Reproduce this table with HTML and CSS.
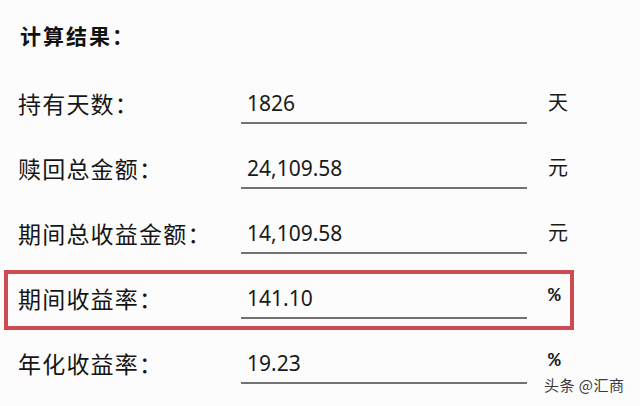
FILE: index.html
```html
<!DOCTYPE html>
<html lang="zh-CN">
<head>
<meta charset="utf-8">
<link rel="stylesheet" href="styles.css">
</head>
<body>
<div class="page">
  <h1 class="title">计算结果：</h1>
  <div class="row">
    <div class="label">持有天数：</div>
    <div class="field">1826</div>
    <div class="unit">天</div>
  </div>
  <div class="row">
    <div class="label">赎回总金额：</div>
    <div class="field">24,109.58</div>
    <div class="unit">元</div>
  </div>
  <div class="row">
    <div class="label">期间总收益金额：</div>
    <div class="field">14,109.58</div>
    <div class="unit">元</div>
  </div>
  <div class="row row-highlight">
    <div class="label">期间收益率：</div>
    <div class="field">141.10</div>
    <div class="unit unit-pct">%</div>
  </div>
  <div class="row">
    <div class="label">年化收益率：</div>
    <div class="field">19.23</div>
    <div class="unit unit-pct">%</div>
  </div>
  <div class="watermark">头条 @汇商</div>
</div>
</body>
</html>
```
FILE: styles.css
```css
html, body {
  margin: 0;
  padding: 0;
  background: #fcfcfd;
}
body {
  width: 640px;
  height: 406px;
  overflow: hidden;
  font-family: "Noto Sans CJK SC", "Noto Sans", sans-serif;
  color: #141414;
}
.page {
  position: relative;
  height: 406px;
  padding: 20px 0 0 18px;
  box-sizing: border-box;
}
.title {
  margin: 0 0 9px 2px;
  height: 30px;
  line-height: 30px;
  font-size: 21px;
  font-weight: 700;
  letter-spacing: 2px;
  color: #111;
}
.row {
  position: relative;
  width: 556px;
  height: 65px;
  display: grid;
  grid-template-columns: 223px 286px auto;
  align-items: end;
}
.label {
  height: 42px;
  line-height: 42px;
  font-size: 23px;
  letter-spacing: 1.2px;
  color: #151515;
  white-space: nowrap;
}
.field {
  height: 40px;
  line-height: 42px;
  padding-left: 6px;
  border-bottom: 2px solid #727272;
  font-family: "Noto Sans", "Open Sans", sans-serif;
  font-size: 21px;
  color: #1a1a1a;
}
.unit {
  height: 42px;
  padding-left: 21px;
  line-height: 40px;
  font-size: 20px;
  color: #1a1a1a;
}
.unit-pct {
  font-family: "Liberation Mono", monospace;
  font-weight: 700;
  font-size: 21px;
  line-height: 38px;
}
.row-highlight::after {
  content: "";
  position: absolute;
  left: -14px;
  right: 0;
  top: 16px;
  bottom: -11px;
  border: 4px solid #cc4b50;
  pointer-events: none;
}
.watermark {
  position: absolute;
  left: 544px;
  top: 375px;
  font-size: 15px;
  line-height: 20px;
  color: #3a3a3a;
  text-shadow: 1px 1px 1px rgba(255, 255, 255, 0.8);
  letter-spacing: 0.5px;
}
```
